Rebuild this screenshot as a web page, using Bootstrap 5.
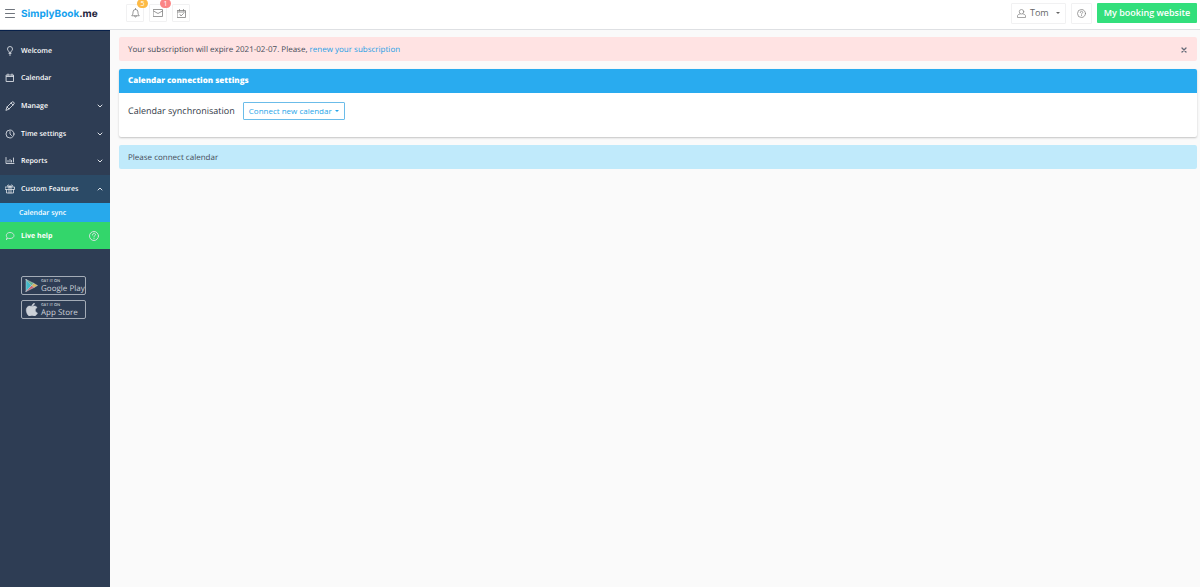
<!DOCTYPE html>
<html lang="en">
<head>
<meta charset="utf-8">
<meta name="viewport" content="width=device-width, initial-scale=1">
<title>SimplyBook.me – Calendar sync</title>
<link href="https://cdn.jsdelivr.net/npm/bootstrap@5.3.0/dist/css/bootstrap.min.css" rel="stylesheet">
<style>
  body { font-family: "Open Sans", sans-serif; font-size: 8px; line-height: 12px; color: #444b57; background: #fafafa; text-rendering: geometricPrecision; }
  svg { display: block; flex: none; fill: none; stroke: currentColor; stroke-linecap: round; stroke-linejoin: round; }
  .btn { --bs-btn-font-size: 8px; --bs-btn-line-height: 12px; --bs-btn-border-radius: 1px; }

  .topbar { height: 30px; background: #fff; border-bottom: 1px solid #dee0e3; padding: 0 3px 3px 5px; }
  .burger { color: #70757d; padding: 0; border: 0; margin-right: 6px; }
  .logo { font-family: Inter, "Open Sans", sans-serif; font-size: 10px; font-weight: 700; line-height: 16px; color: #149fee; text-decoration: none; margin-top: 1px; }
  .logo span { color: #1c2139; }
  .brand-area { width: 121px; }
  .tools { gap: 5px; }
  .tool { --bs-btn-padding-x: 0; --bs-btn-padding-y: 0; --bs-btn-border-color: #f1f1f2; --bs-btn-color: #808080; width: 18px; height: 18px; position: relative; }
  .counter { position: absolute; top: -6px; right: -5px; width: 11px; height: 9px; border-radius: 5px; font-size: 7px; line-height: 9px; color: #fff; }
  .counter-amber { background: #fdba45; }
  .counter-red { background: #fb8585; }
  .user-btn { --bs-btn-color: #666; --bs-btn-border-color: #f1f1f2; --bs-btn-padding-x: 5px; --bs-btn-padding-y: 0; --bs-btn-font-size: 9px; height: 21px; width: 55px; }
  .user-btn svg { color: #888; }
  .help-btn { width: 21px; height: 21px; margin: 0 5px; }
  .caret { width: 0; height: 0; border: 2px solid transparent; border-top-color: currentColor; border-bottom: 0; }
  .site-btn { --bs-btn-font-size: 9px; --bs-btn-font-weight: 600; --bs-btn-padding-x: 0; --bs-btn-padding-y: 0; width: 100px; height: 20px; background: #33df7c; color: #fff; white-space: nowrap; }

  .sidebar { width: 110px; flex: none; background: #2e3d54; border-top: 1px solid #07204a; padding-top: 6px; }
  .sidebar a { color: #fff; text-decoration: none; }
  .menu-main { height: 138px; }
  .menu-link { padding: 0 7px 0 5px; font-size: 7px; font-weight: 600; }
  .menu-link svg { color: #dfe3e8; }
  .menu-link.open { height: 28px; background: #2b4a66; }
  .menu-link.help { height: 27px; background: #33d66b; font-weight: 700; }
  .menu-text { margin-left: 6px; padding-top: 2px; }
  .sub-link { height: 19px; padding: 2px 0 0 19px; background: #27a9ec; font-size: 7px; font-weight: 600; }
  .stores { margin: 27px 0 0 21px; gap: 5px; }
  .store { width: 65px; height: 19px; border: 1px solid #a4acb7; border-radius: 2px; padding-left: 3px; gap: 3px; }
  .sidebar .store { color: #ccd1d8; }
  .store small { font-size: 4px; line-height: 5px; font-weight: 600; }
  .store b { font-size: 8px; line-height: 9px; font-weight: 400; white-space: nowrap; }

  .content { padding: 7px 3px 8px 9px; gap: 8px; min-width: 0; }
  .notice { min-height: 24px; padding: 1px 10px 0 9px; border: 0; border-radius: 2px; }
  .notice-red { background: #ffe3e3; }
  .notice-red a { color: #27a0e5; text-decoration: none; }
  .notice-blue { background: #c0eafb; }
  .close-btn { border: 0; padding: 0; color: #656b78; background: none; }
  .panel { border: 0; border-radius: 2px; background: #fff; box-shadow: 0 1px 2px rgba(0,0,0,.22); }
  .panel-top { height: 24px; padding: 0 9px; background: #29abef; color: #fff; border-radius: 2px 2px 0 0; }
  .panel-top h1 { font-size: 8px; line-height: 12px; font-weight: 800; }
  .panel-main { padding: 9px 9px 17px; gap: 8px; }
  .panel-main label { font-size: 9px; font-weight: 500; color: #333a48; }
  .connect-btn { --bs-btn-padding-x: 5px; --bs-btn-padding-y: 0; --bs-btn-color: #27a5e9; --bs-btn-border-color: #6bbce9; --bs-btn-font-weight: 500; height: 18px; white-space: nowrap; }
  .connect-btn .caret { margin-left: 3px; }
</style>
</head>
<body class="d-flex flex-column min-vh-100">
<header class="topbar d-flex align-items-center">
  <div class="brand-area d-flex align-items-center">
    <button class="burger btn" type="button" aria-label="Toggle menu"><svg width="10" height="10" viewBox="0 0 10 10"><path d="M.5 1.500h9M.5 5.500h9M.5 9.500h9"/></svg></button>
    <a class="logo" href="#">SimplyBook<span>.me</span></a>
  </div>
  <div class="tools d-flex">
    <button class="btn tool d-flex align-items-center justify-content-center" type="button" aria-label="Notifications"><svg width="9" height="10" viewBox="0 0 18 20" stroke-width="1.6"><path d="M2 15c2-2 2-4 2-7a5 5 0 0 1 10 0c0 3 0 5 2 7zM7 16c0 3 4 3 4 0M9 1v2"/></svg><span class="counter counter-amber">5</span></button>
    <button class="btn tool d-flex align-items-center justify-content-center" type="button" aria-label="Messages"><svg width="10" height="8" viewBox="0 0 20 16" stroke-width="1.6"><path d="M1 1h18v14H1zM1 4l9 5 9-5"/></svg><span class="counter counter-red">1</span></button>
    <button class="btn tool d-flex align-items-center justify-content-center" type="button" aria-label="Bookings"><svg width="9" height="9" viewBox="0 0 18 18" stroke-width="1.6"><path d="M1 3h16v14H1zM1 6h16M5 1v3M13 1v3M6 11l2 3 5-5"/></svg></button>
  </div>
  <div class="d-flex align-items-center ms-auto">
    <button class="btn user-btn d-flex align-items-center" type="button"><svg width="9" height="9" viewBox="0 0 18 18" stroke-width="1.5"><circle cx="9" cy="5.5" r="4.5"/><path d="M6 10c-3 0-5 2-5 4v3h16v-3c0-2-2-4-5-4"/></svg><span class="ms-1">Tom</span><i class="caret ms-auto"></i></button>
    <button class="btn tool help-btn d-flex align-items-center justify-content-center" type="button" aria-label="Help"><svg width="9" height="9" viewBox="0 0 18 18" stroke-width="1.5"><circle cx="9" cy="9" r="8"/><path d="M6.5 7c0-4 5-3 5-.5C11.500 8.500 9 8.500 9 10.500M9 13v.5"/></svg></button>
    <button class="btn site-btn d-flex align-items-center justify-content-center" type="button">My booking website</button>
  </div>
</header>
<div class="d-flex flex-grow-1">
  <nav class="sidebar d-flex flex-column" aria-label="Main">
    <div class="menu-main d-flex flex-column">
      <a class="menu-link flex-fill d-flex align-items-center" href="#"><svg width="10" height="10" viewBox="0 0 20 20" stroke-width="1.7"><path d="M8 12c0-2-3-3-3-6a5 5 0 0 1 10 0c0 3-3 4-3 6zM8 15h4M9 18h2"/></svg><span class="menu-text">Welcome</span></a>
      <a class="menu-link flex-fill d-flex align-items-center" href="#"><svg width="10" height="10" viewBox="0 0 20 20" stroke-width="1.7"><path d="M3 4h14v13H3zM3 7h14M6 2v3M14 2v3"/></svg><span class="menu-text">Calendar</span></a>
      <a class="menu-link flex-fill d-flex align-items-center" href="#"><svg width="10" height="10" viewBox="0 0 20 20" stroke-width="1.7"><path d="M2 18l2-6L14 2c2-2 6 2 4 4L8 16zM4 12l4 4M12 4l4 4"/></svg><span class="menu-text">Manage</span><svg class="ms-auto" width="6" height="4" viewBox="0 0 6 4"><path d="M1 1l2 2 2-2"/></svg></a>
      <a class="menu-link flex-fill d-flex align-items-center" href="#"><svg width="10" height="10" viewBox="0 0 20 20" stroke-width="1.7"><circle cx="10" cy="10" r="8"/><path d="M10 5v5l3 3"/></svg><span class="menu-text">Time settings</span><svg class="ms-auto" width="6" height="4" viewBox="0 0 6 4"><path d="M1 1l2 2 2-2"/></svg></a>
      <a class="menu-link flex-fill d-flex align-items-center" href="#"><svg width="10" height="10" viewBox="0 0 20 20" stroke-width="1.7"><path d="M2 3v12h16M6 9v3M10 7v5M13 9v3M17 4v8"/></svg><span class="menu-text">Reports</span><svg class="ms-auto" width="6" height="4" viewBox="0 0 6 4"><path d="M1 1l2 2 2-2"/></svg></a>
    </div>
    <a class="menu-link open d-flex align-items-center" href="#"><svg width="10" height="10" viewBox="0 0 20 20" stroke-width="1.600"><path d="M1 6h18v5H1zM3 11v7h14v-7M8 6v12M12 6v12M10 6C7 6 4 5 5 3s4-1 5 3c1-4 4-5 5-3s-2 3-5 3"/></svg><span class="menu-text">Custom Features</span><svg class="ms-auto" width="6" height="4" viewBox="0 0 6 4"><path d="M1 3l2-2 2 2"/></svg></a>
    <a class="sub-link d-flex align-items-center" href="#" aria-current="page">Calendar sync</a>
    <a class="menu-link help d-flex align-items-center" href="#"><svg width="10" height="10" viewBox="0 0 20 20" stroke-width="1.7"><path d="M3 17l1-4C1 9 3 3 10 3c10 0 11 12 0 12-2 0-3 0-4-.5z"/></svg><span class="menu-text">Live help</span><svg class="ms-auto me-1" width="10" height="10" viewBox="0 0 20 20" stroke-width="1.8"><circle cx="10" cy="10" r="9"/><path d="M7 8c0-5 6-4 6-1 0 2-3 2-3 5M10 15v.5"/></svg></a>
    <div class="stores d-flex flex-column">
      <a class="store d-flex align-items-center" href="#"><svg width="13" height="13" viewBox="0 0 26 26" stroke="none"><path fill="#43b9c8" d="M2 1v24l12-12z"/><path fill="#66b68a" d="M2 1l16 8-4 4z"/><path fill="#d7616a" d="M2 25l16-8-4-4z"/><path fill="#dcb75b" d="M18 9l7 4-7 4-4-4z"/></svg><span class="d-flex flex-column"><small>GET IT ON</small><b>Google Play</b></span></a>
      <a class="store d-flex align-items-center" href="#"><svg width="13" height="13" viewBox="0 0 26 26" stroke="none"><path fill="#ccd1d8" d="M14 6c0-3 2-5 5-6 0 3-2 6-5 6zM14 7c2 0 3-1 5-1 2 0 4 1 5 3-5 3-4 9 1 11-2 4-4 6-6 6-2 0-3-1-5-1s-3 1-5 1C5 26 0 14 4 9c3-4 7-3 10-2z"/></svg><span class="d-flex flex-column"><small>GET IT ON</small><b>App Store</b></span></a>
    </div>
  </nav>
  <main class="content d-flex flex-column flex-grow-1">
    <div class="alert notice notice-red d-flex align-items-center mb-0" role="alert"><span>Your subscription will expire 2021-02-07. Please, <a href="#">renew your subscription</a></span><button class="close-btn ms-auto" type="button" aria-label="Close"><svg width="6" height="6" viewBox="0 0 6 6" stroke-width="1.3"><path d="M1 1l4 4M5 1L1 5"/></svg></button></div>
    <section class="card panel">
      <div class="panel-top d-flex align-items-center"><h1 class="m-0">Calendar connection settings</h1></div>
      <div class="panel-main d-flex align-items-center">
        <label for="connect">Calendar synchronisation</label>
        <button id="connect" class="btn connect-btn d-flex align-items-center" type="button">Connect new calendar<i class="caret"></i></button>
      </div>
    </section>
    <div class="alert notice notice-blue d-flex align-items-center mb-0" role="status">Please connect calendar</div>
  </main>
</div>
<script src="https://cdn.jsdelivr.net/npm/bootstrap@5.3.0/dist/js/bootstrap.bundle.min.js"></script>
</body>
</html>
